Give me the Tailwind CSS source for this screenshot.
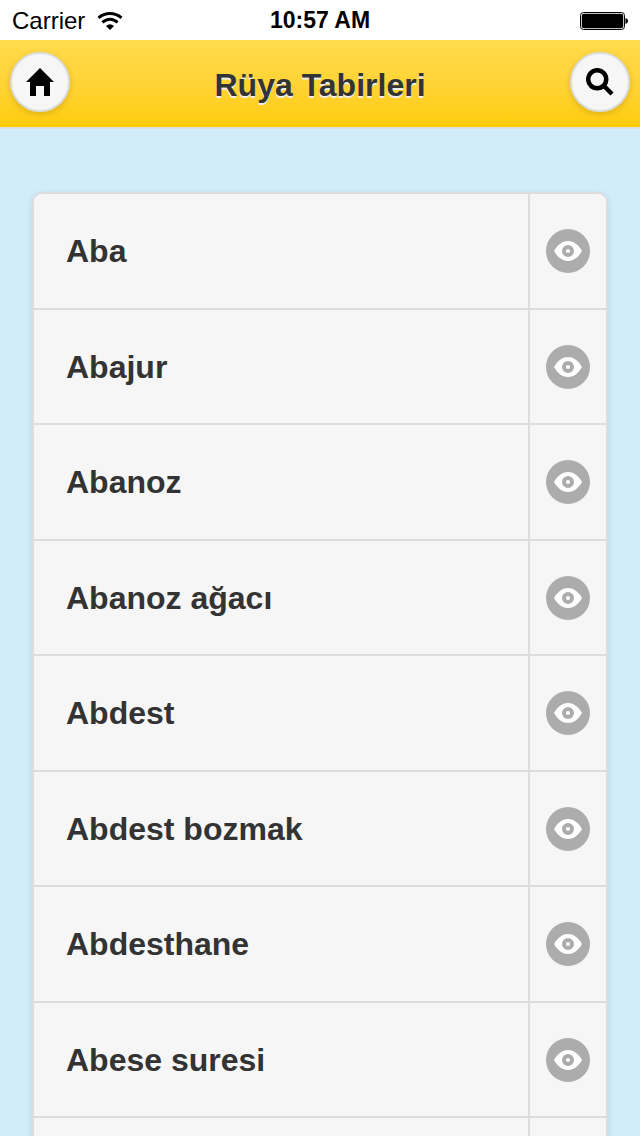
<!DOCTYPE html>
<html lang="tr">
<head>
<meta charset="utf-8">
<meta name="viewport" content="width=device-width, initial-scale=1">
<title>Rüya Tabirleri</title>
<script src="https://cdn.jsdelivr.net/npm/@tailwindcss/browser@4"></script>
</head>
<body class="flex h-screen flex-col overflow-hidden bg-[#d1edfc] font-['Liberation_Sans',Arial,sans-serif] text-[#333]">
<svg class="hidden" aria-hidden="true">
  <symbol id="eye" viewBox="0 0 44 44">
    <circle cx="22" cy="22" r="22" fill="#acacac"/>
    <path d="M8 22C12 15 17 12 22 12S32 15 36 22C32 29 27 32 22 32S12 29 8 22Z" fill="#fff"/>
    <circle cx="22" cy="22" r="4" fill="#fff" stroke="#acacac" stroke-width="4"/>
  </symbol>
</svg>
<div class="grid h-10 shrink-0 grid-cols-3 items-center bg-white px-3 pt-px text-black">
  <div class="flex items-center gap-3 text-2xl">
    <span>Carrier</span>
    <svg class="h-[18px] w-[26px]" viewBox="0 0 26 18" fill="none" stroke="#000" stroke-width="3" role="img" aria-label="Wi-Fi">
      <path d="M1.5 5.8Q6.5 1.5 13 1.5T24.5 5.8M5.4 10.4Q9 7.2 13 7.2T20.6 10.4"/>
      <path d="M9 14Q13 10.6 17 14L13 18Z" fill="#000" stroke="none"/>
    </svg>
  </div>
  <time class="text-center text-[23px] font-bold">10:57 AM</time>
  <svg class="h-5 w-[49px] justify-self-end" viewBox="0 0 49 20" role="img" aria-label="Battery">
    <rect x="1.5" y="1.5" width="44" height="17" rx="3" fill="#fff" stroke="#000"/>
    <rect x="2.8" y="2.8" width="41.4" height="14.4" rx="2"/>
    <path d="M46.5 7q2.5 .5 2.5 3t-2.5 3z"/>
  </svg>
</div>
<header class="flex h-[89px] shrink-0 items-center justify-between border-b-2 border-[#ddd] bg-linear-to-b from-[#ffdb4d] to-[#ffcc00] px-[10px]">
  <button aria-label="Ana sayfa" class="mb-1 flex size-[60px] items-center justify-center rounded-full border-2 border-[#ddd] bg-[#f6f6f6] shadow-[0_2px_6px_rgba(0,0,0,0.15)]">
    <svg class="size-7" viewBox="0 0 28 28"><path d="M14 0L28 14H24V28H18V18H10V28H4V14H0Z"/></svg>
  </button>
  <h1 class="pt-0.5 text-[32px] leading-10 font-bold [text-shadow:0_2px_0_#eee]">Rüya Tabirleri</h1>
  <button aria-label="Ara" class="mb-1 flex size-[60px] items-center justify-center rounded-full border-2 border-[#ddd] bg-[#f6f6f6] shadow-[0_2px_6px_rgba(0,0,0,0.15)]">
    <svg class="size-7" viewBox="0 0 28 28" fill="none" stroke="#000" stroke-width="4.5"><circle cx="11.2" cy="11.2" r="9"/><path d="M17.5 17.5L26 26"/></svg>
  </button>
</header>
<main class="flex min-h-0 flex-1 flex-col px-8 pt-[63px]">
  <ul class="flex min-h-0 flex-1 flex-col rounded-t-[10px] border-x-2 border-t-2 border-[#ddd] bg-[#f6f6f6] text-[32px] leading-10 font-bold shadow-[0_2px_6px_rgba(0,0,0,0.12)] *:flex *:shrink-0 *:border-[#ddd] *:odd:h-[116px] *:even:h-[115px] *:not-first:border-t-2">
    <li class="h-[114px]!"><a href="#" class="flex flex-1 items-center px-8">Aba</a><a href="#" aria-label="Aba: göster" class="flex w-[78px] items-center justify-center border-l-2 border-[#ddd]"><svg class="size-11"><use href="#eye"/></svg></a></li>
    <li><a href="#" class="flex flex-1 items-center px-8">Abajur</a><a href="#" aria-label="Abajur: göster" class="flex w-[78px] items-center justify-center border-l-2 border-[#ddd]"><svg class="size-11"><use href="#eye"/></svg></a></li>
    <li><a href="#" class="flex flex-1 items-center px-8">Abanoz</a><a href="#" aria-label="Abanoz: göster" class="flex w-[78px] items-center justify-center border-l-2 border-[#ddd]"><svg class="size-11"><use href="#eye"/></svg></a></li>
    <li><a href="#" class="flex flex-1 items-center px-8">Abanoz ağacı</a><a href="#" aria-label="Abanoz ağacı: göster" class="flex w-[78px] items-center justify-center border-l-2 border-[#ddd]"><svg class="size-11"><use href="#eye"/></svg></a></li>
    <li><a href="#" class="flex flex-1 items-center px-8">Abdest</a><a href="#" aria-label="Abdest: göster" class="flex w-[78px] items-center justify-center border-l-2 border-[#ddd]"><svg class="size-11"><use href="#eye"/></svg></a></li>
    <li><a href="#" class="flex flex-1 items-center px-8">Abdest bozmak</a><a href="#" aria-label="Abdest bozmak: göster" class="flex w-[78px] items-center justify-center border-l-2 border-[#ddd]"><svg class="size-11"><use href="#eye"/></svg></a></li>
    <li><a href="#" class="flex flex-1 items-center px-8">Abdesthane</a><a href="#" aria-label="Abdesthane: göster" class="flex w-[78px] items-center justify-center border-l-2 border-[#ddd]"><svg class="size-11"><use href="#eye"/></svg></a></li>
    <li><a href="#" class="flex flex-1 items-center px-8">Abese suresi</a><a href="#" aria-label="Abese suresi: göster" class="flex w-[78px] items-center justify-center border-l-2 border-[#ddd]"><svg class="size-11"><use href="#eye"/></svg></a></li>
    <li aria-hidden="true" class="h-auto! flex-1"><span class="flex-1"></span><span class="w-[78px] border-l-2 border-[#ddd]"></span></li>
  </ul>
</main>
</body>
</html>
